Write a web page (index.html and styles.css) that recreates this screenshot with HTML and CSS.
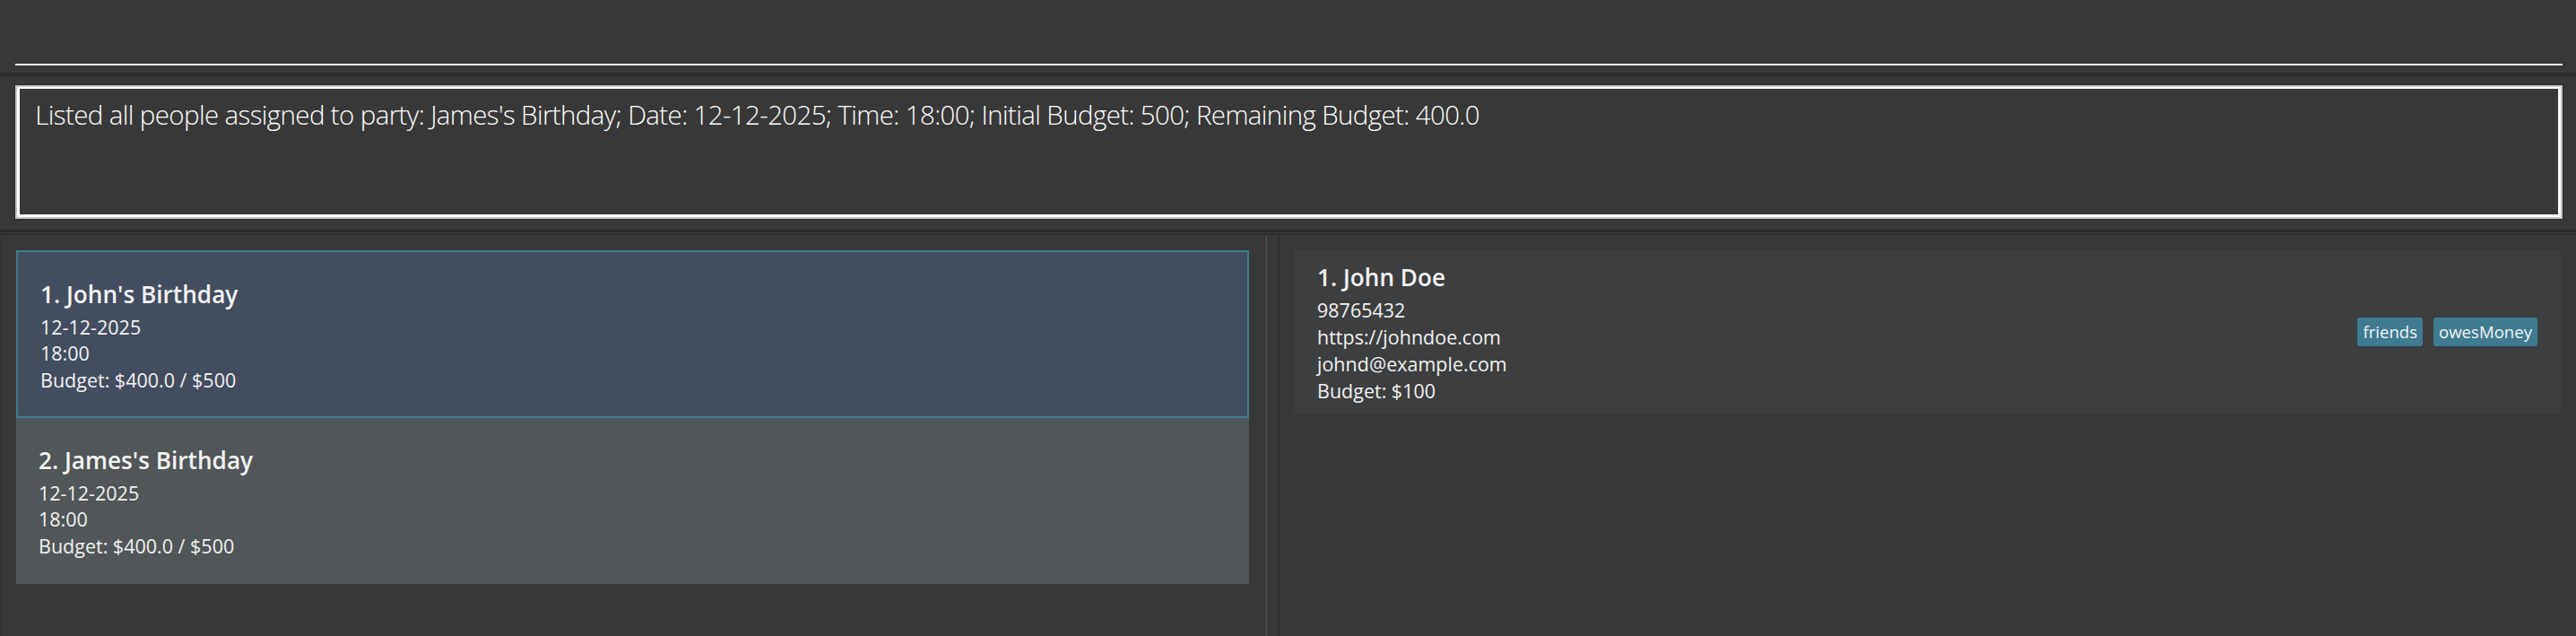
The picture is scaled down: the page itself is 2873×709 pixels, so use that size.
FILE: index.html
```html
<!DOCTYPE html>
<html lang="en">
<head>
<meta charset="utf-8">
<title>Party Planner</title>
<link rel="stylesheet" href="styles.css">
</head>
<body>
<div class="app">
  <div class="command-pane">
    <div class="command-field"></div>
  </div>
  <div class="split-h"></div>
  <div class="result-pane">
    <div class="result-box">
      <p class="result-text">Listed all people assigned to party: James's Birthday; Date: 12-12-2025; Time: 18:00; Initial Budget: 500; Remaining Budget: 400.0</p>
    </div>
  </div>
  <div class="split-h2"></div>
  <div class="lists">
    <section class="list-pane party-pane">
      <div class="party-card selected">
        <div class="big-label">1. John's Birthday</div>
        <div class="small-label">12-12-2025</div>
        <div class="small-label">18:00</div>
        <div class="small-label">Budget: $400.0 / $500</div>
      </div>
      <div class="party-card odd">
        <div class="big-label">2. James's Birthday</div>
        <div class="small-label">12-12-2025</div>
        <div class="small-label">18:00</div>
        <div class="small-label">Budget: $400.0 / $500</div>
      </div>
    </section>
    <div class="split-v"></div>
    <section class="list-pane person-pane">
      <div class="person-card">
        <div class="person-info">
          <div class="big-label">1. John Doe</div>
          <div class="small-label">98765432</div>
          <div class="small-label">https://johndoe.com</div>
          <div class="small-label">johnd@example.com</div>
          <div class="small-label">Budget: $100</div>
        </div>
        <div class="tags">
          <span class="tag">friends</span>
          <span class="tag">owesMoney</span>
        </div>
      </div>
    </section>
  </div>
</div>
</body>
</html>
```
FILE: styles.css
```css
* { box-sizing: border-box; }
html, body { margin: 0; padding: 0; }
body {
  width: 2873px;
  height: 709px;
  overflow: hidden;
  background: #383838;
  font-family: "Open Sans", "Noto Sans", sans-serif;
  color: #f2f2f2;
}
.app { display: flex; flex-direction: column; height: 709px; }

/* command box */
.command-pane { height: 81px; padding: 0 15px 0 17px; }
.command-field { height: 73px; border-bottom: 2px solid #ececec; }

.split-h { height: 4px; background: #2c2c2c; }

/* result display */
.result-pane { height: 171px; padding: 12px 17px 14px 19px; }
.result-box {
  height: 145px;
  border-style: solid;
  border-color: #ffffff;
  border-width: 2px 3px 3px 3px;
  box-shadow: 0 0 0 2px #c6c6c6, 0 0 0 3px #2b2b2b;
  padding: 8.5px 17px 0 17.3px;
}
.result-text {
  margin: 0;
  font-family: "Open Sans", sans-serif;
  font-weight: 300;
  font-size: 29.5px;
  line-height: 40px;
  letter-spacing: -0.63px;
  color: #ffffff;
  white-space: nowrap;
}

.split-h2 {
  height: 6px;
  background: linear-gradient(to bottom, #2b2b2b 0 3px, #3a3a3a 3px 4px, #2e2e2e 4px 6px);
}

/* lower lists */
.lists { flex: 1; display: flex; }
.list-pane { display: flex; flex-direction: column; padding-top: 17px; }
.party-pane { width: 1410px; padding-left: 18px; padding-right: 17px; border-left: 1px solid #333333; padding-left: 17px; }
.person-pane { flex: 1; padding-left: 17px; padding-right: 17px; }
.split-v {
  width: 17px;
  background: linear-gradient(to right, #303030 0 1px, #4a4a4a 1px 3px, #383838 3px 15px, #2e2e2e 15px 17px);
}

.big-label {
  font-weight: 600;
  font-size: 26.2px;
  line-height: 35px;
  margin-bottom: 4px;
  white-space: nowrap;
}
.small-label {
  font-weight: 400;
  font-size: 21.5px;
  line-height: 29.8px;
  white-space: nowrap;
}

.party-card {
  height: 185px;
  padding: 29.6px 25px 0 25px;
  background: #515658;
}
.party-card.selected {
  height: 187px;
  background: #424d5f;
  border: 2px solid #3e7b91;
  padding-left: 25px;
}

.person-card {
  height: 182px;
  background: #3c3e3f;
  padding: 13.3px 26px 0 25px;
  display: flex;
  justify-content: space-between;
  align-items: flex-start;
}
.tags {
  display: flex;
  gap: 12px;
  align-self: center;
  margin-top: -13.3px;
}
.tag {
  display: inline-block;
  height: 32px;
  line-height: 32px;
  padding: 0 6px;
  font-size: 18.6px;
  font-weight: 400;
  color: #f4f4f4;
  background: #3e7b91;
  border-radius: 3px;
}
```
